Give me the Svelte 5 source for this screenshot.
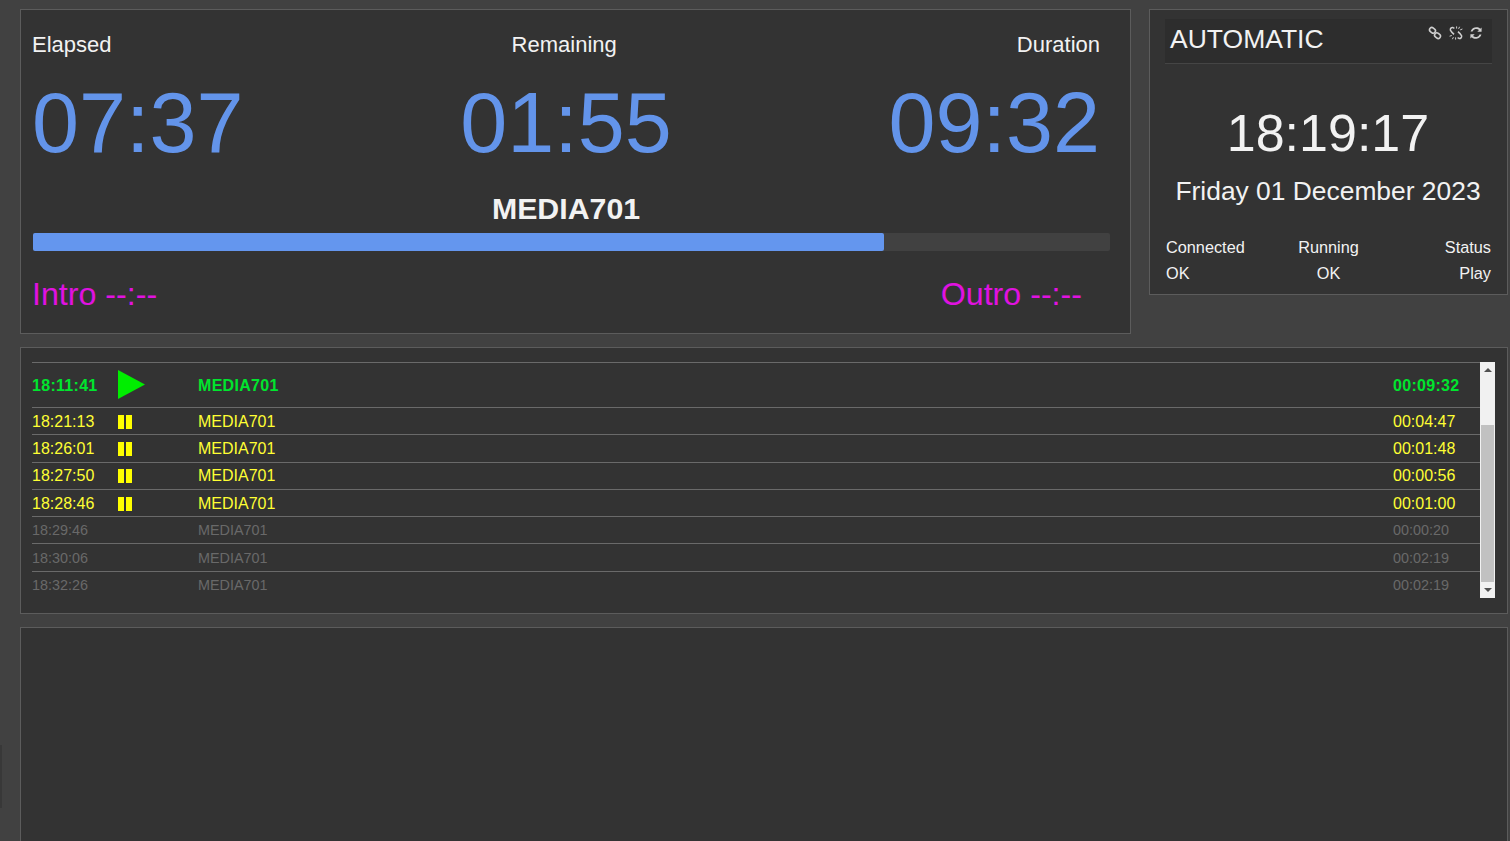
<script>
	const rows = [
		{ start: '18:21:13', name: 'MEDIA701', length: '00:04:47', state: 'next' },
		{ start: '18:26:01', name: 'MEDIA701', length: '00:01:48', state: 'next' },
		{ start: '18:27:50', name: 'MEDIA701', length: '00:00:56', state: 'next' },
		{ start: '18:28:46', name: 'MEDIA701', length: '00:01:00', state: 'next' },
		{ start: '18:29:46', name: 'MEDIA701', length: '00:00:20', state: 'idle' },
		{ start: '18:30:06', name: 'MEDIA701', length: '00:02:19', state: 'idle' },
		{ start: '18:32:26', name: 'MEDIA701', length: '00:02:19', state: 'idle' }
	];
	const progress = (884 - 33) / (1110 - 33) * 100;
</script>

<main class="page">
	<div class="edge"></div>
	<div class="top">
		<section class="panel player">
			<div class="labels">
				<span>Elapsed</span>
				<span>Remaining</span>
				<span>Duration</span>
			</div>
			<div class="timers">
				<span>07:37</span>
				<span>01:55</span>
				<span>09:32</span>
			</div>
			<h1>MEDIA701</h1>
			<div class="bar"><div class="fill" style="width: {progress}%"></div></div>
			<div class="marks">
				<span>Intro --:--</span>
				<span class="outro">Outro --:--</span>
			</div>
		</section>

		<section class="panel side">
			<header>
				<h2>AUTOMATIC</h2>
				<div class="tools">
					<svg viewBox="0 0 14 14" width="14" height="14" fill="none" stroke="currentColor" stroke-width="1.6">
						<rect x="1.4" y="2" width="6.2" height="4.6" rx="2.3" transform="rotate(40 4.5 4.3)" />
						<rect x="6.4" y="7.4" width="6.2" height="4.6" rx="2.3" transform="rotate(40 9.5 9.7)" />
					</svg>
					<svg viewBox="0 0 14 14" width="14" height="14" fill="none" stroke="currentColor" stroke-width="1.5">
						<path d="M5.4 2.4 4 1.6C2.4 1.2 1 2.6 1.4 4.2l1.6 2.2 2 2" />
						<path d="M8.6 11.6l1.4.8c1.6.4 3-1 2.6-2.6L11 7.6 9 5.6" />
						<path d="M7.6.4v2.2M10.6.8 9.6 2.8M13.4 3l-2.2.9M.6 10.2l2.2-.7M3.4 13.2l1-2M6.6 13.6v-2.2" stroke-width="1" />
					</svg>
					<svg viewBox="0 0 14 14" width="14" height="14" fill="currentColor">
						<path d="M12.6 1.4v4.3H8.3l1.7-1.7A4 4 0 0 0 3.5 5.6H1.6A5.9 5.9 0 0 1 11.3 2.7z" />
						<path d="M1.4 12.6V8.3h4.3L4 10a4 4 0 0 0 6.5-1.6h1.9a5.9 5.9 0 0 1-9.7 2.9z" />
					</svg>
				</div>
			</header>
			<div class="clock">18:19:17</div>
			<div class="date">Friday 01 December 2023</div>
			<div class="stats">
				<div><span>Connected</span><span>OK</span></div>
				<div class="mid"><span>Running</span><span>OK</span></div>
				<div class="end"><span>Status</span><span>Play</span></div>
			</div>
		</section>
	</div>

	<section class="panel list">
		<div class="rows">
			<div class="row current">
				<span class="start">18:11:41</span>
				<span class="icon">
					<svg viewBox="0 0 27 29" width="27" height="29"><path d="M0 0 27 14.5 0 29z" fill="#00ee00" /></svg>
				</span>
				<span class="name">MEDIA701</span>
				<span class="length">00:09:32</span>
			</div>
			{#each rows as row}
				<div class="row {row.state}">
					<span class="start">{row.start}</span>
					<span class="icon">
						{#if row.state === 'next'}<span class="pause"><i></i><i></i></span>{/if}
					</span>
					<span class="name">{row.name}</span>
					<span class="length">{row.length}</span>
				</div>
			{/each}
		</div>
		<div class="scroll">
			<span class="arrow up"></span>
			<div class="track"><div class="thumb"></div></div>
			<span class="arrow down"></span>
		</div>
	</section>

	<section class="panel empty"></section>
</main>

<style>
	:global(body) {
		background: #414141;
		overflow: hidden;
	}

	.page {
		position: relative;
		height: 841px;
		box-sizing: border-box;
		padding: 9px 2px 0 20px;
		display: flex;
		flex-direction: column;
		gap: 13px;
		font-family: 'Liberation Sans', Arial, sans-serif;
		color: #f2f2f2;
		overflow: hidden;
	}

	.edge {
		position: absolute;
		left: 0;
		top: 745px;
		width: 2px;
		height: 63px;
		background: #383838;
	}

	.panel {
		background: #333333;
		border: 1px solid #5c5c5c;
		box-sizing: border-box;
	}

	.top {
		display: flex;
		align-items: flex-start;
		gap: 18px;
	}

	.player {
		width: 1111px;
		height: 325px;
		padding: 21px 30px 0 11px;
		flex: none;
	}

	.labels {
		display: flex;
		justify-content: space-between;
		font-size: 22px;
		line-height: 28px;
	}

	.timers {
		display: flex;
		justify-content: space-between;
		margin: 16px 0 0 0;
		font-size: 84.5px;
		line-height: 96px;
		color: #6394ea;
	}

	h1 {
		margin: 20px 0 0 0;
		font-size: 30.3px;
		line-height: 36px;
		text-align: center;
	}

	.bar {
		height: 18px;
		margin: 6px -10px 0 1px;
		background: #414141;
		border-radius: 2px;
	}

	.fill {
		height: 100%;
		background: #6496ee;
		border-radius: 2px;
	}

	.marks {
		display: flex;
		justify-content: space-between;
		margin-top: 24px;
		font-size: 32.2px;
		line-height: 38px;
		color: #e012e0;
	}

	.outro {
		margin-right: 18px;
	}

	.side {
		flex: 1;
		height: 286px;
		padding: 9px 16px 0 15px;
	}

	header {
		display: flex;
		justify-content: space-between;
		height: 44px;
		margin-right: -1px;
		padding: 0 9px 0 5px;
		background: #2d2d2d;
		border-bottom: 1px solid #454545;
	}

	h2 {
		margin: 0;
		font-size: 26.5px;
		font-weight: 400;
		line-height: 40px;
	}

	.tools {
		display: flex;
		gap: 6.5px;
		padding-top: 7px;
		color: #cfcfcf;
		height: 14px;
	}

	.clock {
		margin-top: 39px;
		font-size: 52px;
		line-height: 60px;
		text-align: center;
	}

	.date {
		margin-top: 12px;
		font-size: 26.4px;
		line-height: 32px;
		text-align: center;
	}

	.stats {
		display: grid;
		grid-template-columns: 1fr 1fr 1fr;
		margin-top: 27px;
		padding-left: 1px;
		font-size: 16.3px;
		line-height: 26px;
	}

	.stats div {
		display: flex;
		flex-direction: column;
	}

	.stats .mid {
		align-items: center;
	}

	.stats .end {
		align-items: flex-end;
	}

	.list {
		height: 267px;
		display: flex;
		padding: 14px 12px 0 11px;
	}

	.rows {
		flex: 1;
	}

	.row {
		display: flex;
		align-items: center;
		height: 27.3px;
		box-sizing: border-box;
		padding-top: 1px;
		border-top: 1px solid #6a6a6a;
		font-size: 16px;
		color: #ffff33;
	}

	.current {
		height: 45px;
		color: #00e52e;
		font-weight: 700;
		letter-spacing: 0.3px;
	}

	.current svg {
		margin-top: -2px;
	}

	.idle {
		padding-top: 0;
		color: #696969;
		font-size: 14.4px;
	}

	.start {
		width: 86px;
	}

	.icon {
		width: 80px;
		display: flex;
		align-items: center;
	}

	.name {
		flex: 1;
	}

	.length {
		width: 87px;
	}

	.pause {
		display: flex;
		gap: 2px;
	}

	.pause i {
		width: 6px;
		height: 14px;
		background: #ffff00;
	}

	.scroll {
		width: 15px;
		height: 236px;
		display: flex;
		flex-direction: column;
		background: #f1f1f1;
	}

	.arrow {
		height: 16px;
		flex: none;
		position: relative;
	}

	.arrow::after {
		content: '';
		position: absolute;
		left: 4px;
		top: 6px;
		border: 4px solid transparent;
		border-top: 0;
		border-bottom: 4px solid #505050;
	}

	.arrow.down::after {
		top: 6px;
		border-top: 4px solid #505050;
		border-bottom: 0;
	}

	.track {
		flex: 1;
		padding-top: 47px;
	}

	.thumb {
		height: 157px;
		margin: 0 1px;
		background: #c1c1c1;
	}

	.empty {
		flex: 1;
		margin-bottom: -3px;
	}
</style>
